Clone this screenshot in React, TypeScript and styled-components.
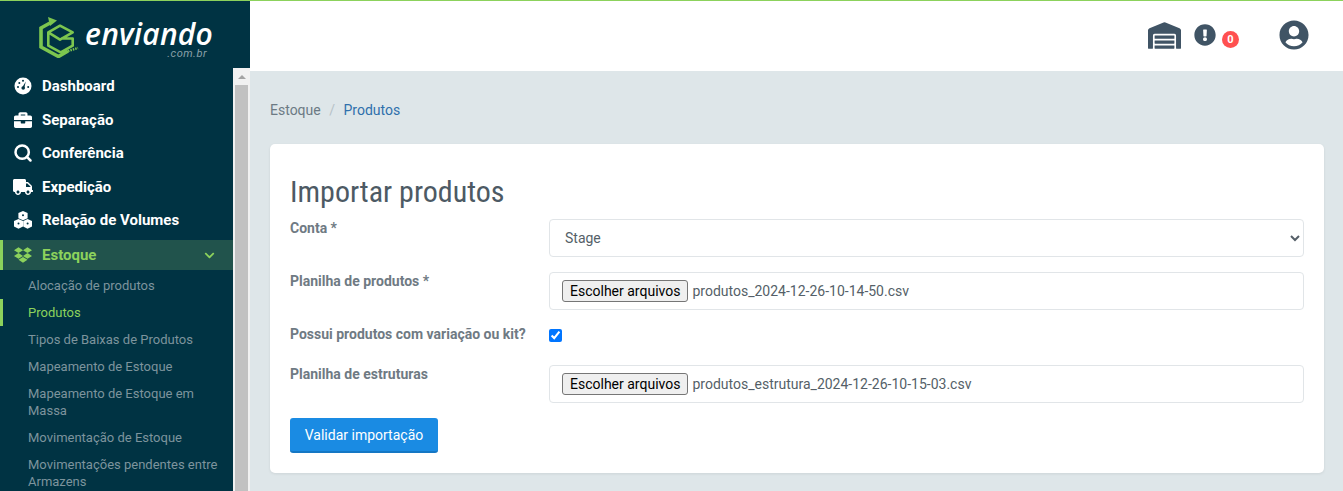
import React from 'react';
import styled, { createGlobalStyle } from 'styled-components';
import { FaBriefcase, FaTruck, FaDropbox, FaChevronDown, FaExclamationCircle, FaUserCircle, FaWarehouse } from 'react-icons/fa';
import { FiSearch } from 'react-icons/fi';

const Global = createGlobalStyle`
  html, body { margin: 0; padding: 0; height: 100%; overflow: hidden; }
  body { font-family: Roboto, "Liberation Sans", sans-serif; background: #dee6e9; }
  * { box-sizing: border-box; }
`;
const Page = styled.div`display: flex; height: 491px; border-top: 1px solid #8cd25c; overflow: hidden;`;
const Side = styled.aside`width: 250px; flex: none; display: flex; flex-direction: column; background: #003343;`;
const Brand = styled.div`height: 67px; flex: none; display: flex; align-items: flex-start; padding: 16px 0 0 39px; gap: 6px;`;
const BrandText = styled.div`display: flex; flex-direction: column; align-items: flex-end; width: 128px; color: #fff; margin-top: 3px;`;
const BrandName = styled.span`font: italic 600 30px/28px "Open Sans", Roboto, sans-serif; letter-spacing: .2px; white-space: nowrap;`;
const BrandSub = styled.span`font: italic 400 11px/11px Roboto, sans-serif; color: #8aa0a8; margin-right: 6px; letter-spacing: .5px;`;
const SideBody = styled.div`display: flex; flex: 1; min-height: 0;`;
const Nav = styled.nav`width: 233px; flex: none; display: flex; flex-direction: column; overflow: hidden; padding-top: 1.5px;`;
const MainItem = styled.div<{ $active?: boolean }>`
  height: ${p => p.$active ? '30px' : '33.5px'}; flex: none; display: flex; align-items: center; padding-left: 14px;
  margin: ${p => p.$active ? '3px 0 1.5px' : '0'};
  font-size: 15px; font-weight: 700; color: ${p => p.$active ? '#8cd25c' : '#fff'};
  background: ${p => p.$active ? '#21534c' : 'transparent'};
  box-shadow: ${p => p.$active ? 'inset 3px 0 0 #8cd25c' : 'none'};
  svg { width: 18px; height: 18px; flex: none; margin-right: 10px; }
`;
const TruckIcon = styled(FaTruck)`&& { width: 20px; height: 18px; margin: 0 9px 0 -1px; }`;
const SearchIcon = styled(FiSearch)`&& { width: 20px; height: 20px; margin: 0 9px 0 -1px; }`;
const Chevron = styled.span`margin-left: auto; display: flex; margin-right: 18px; svg { width: 11px; height: 11px; margin: 0; }`;
const SubItem = styled.div<{ $active?: boolean }>`
  flex: none; padding: 5px 10px 5px 28px; min-height: 27px; font-size: 13px; line-height: 17px;
  color: ${p => p.$active ? '#8cd25c' : '#7d949d'};
  box-shadow: ${p => p.$active ? 'inset 3px 0 0 #8cd25c' : 'none'};
`;
const Scroll = styled.div`width: 17px; flex: none; background: #f1f1f1; border-left: 2px solid #f1f1f1; border-right: 2px solid #f1f1f1; display: flex; flex-direction: column;`;
const ScrollArrow = styled.div`height: 17px; flex: none; display: flex; align-items: center; justify-content: center;
  &::before { content: ""; border-left: 4px solid transparent; border-right: 4px solid transparent; border-bottom: 4px solid #a3a3a3; }`;
const ScrollThumb = styled.div`flex: 1; background: #c1c1c1;`;
const Main = styled.main`flex: 1; min-width: 0; display: flex; flex-direction: column;`;
const Header = styled.header`height: 70px; flex: none; background: #fff; position: relative; color: #405465;`;
const Warehouse = styled.span`position: absolute; left: 898px; top: 21px; display: flex; svg { width: 33px; height: 27px; }`;
const Alert = styled.span`position: absolute; left: 944px; top: 23px; display: flex; svg { width: 22px; height: 22px; }`;
const Badge = styled.span`position: absolute; left: 972px; top: 30px; width: 17px; height: 17px; border-radius: 50%; background: #ff5050; color: #fff; font-size: 11px; font-weight: 700; display: flex; align-items: center; justify-content: center;`;
const User = styled.span`position: absolute; left: 1029px; top: 19px; display: flex; svg { width: 30px; height: 30px; }`;
const Content = styled.div`flex: 1; padding: 30px 19px 0 20px; display: flex; flex-direction: column;`;
const Crumbs = styled.div`font-size: 14px; line-height: 18px; color: #6c7a84; display: flex; gap: 8.5px; margin-bottom: 25px;`;
const Sep = styled.span`color: #b6c2c8;`;
const CrumbLink = styled.span`color: #2f70ac;`;
const Card = styled.section`background: #fff; border-radius: 5px; padding: 31px 20px 20px; box-shadow: 0 1px 3px rgba(0,0,0,.08); display: flex; flex-direction: column;`;
const Title = styled.h1`margin: 0 0 10px; font-weight: 400; font-size: 30px; line-height: 34px; font-stretch: condensed; color: #4d5a64;`;
const Row = styled.div<{ $h: number }>`display: grid; grid-template-columns: 259px 1fr; height: ${p => p.$h}px; margin-bottom: 15px;`;
const Label = styled.label`font-size: 14px; line-height: 18px; font-weight: 700; color: #6f7a83;`;
const Field = styled.div`border: 1px solid #e1e5e8; border-radius: 4px; height: 38px; display: flex; align-items: center; padding: 0 12px;`;
const SelectField = styled.select`border: 1px solid #e1e5e8; border-radius: 4px; height: 38px; width: 100%; background: #fff; padding: 0 11px; font: 14px Roboto, sans-serif; color: #555f68;`;
const FileBtn = styled.button`font: 14px Roboto, sans-serif; height: 22px; padding: 0 7px 0 7px; background: #efefef; border: 1px solid #767676; border-radius: 3px; color: #000; margin-right: 4px;`;
const FileName = styled.span`font: 14px Roboto, sans-serif; color: #555f68;`;
const Check = styled.input`display: block; width: 13px; height: 13px; margin: 4px 0 0; accent-color: #0075ff;`;
const Submit = styled.button`align-self: flex-start; height: 35px; width: 148px; background: #1a8be3; border: 0; border-bottom: 2px solid #1577c4; border-radius: 3px; color: #fff; font: 14px Roboto, sans-serif;`;

const Logo = () => (
  <svg width="40" height="41" viewBox="0 0 40 41" fill="none" stroke="#7cc64f" strokeWidth="3" style={{ flex: 'none' }}>
    <path d="M11 6 L2 11 V30 L19.5 39.5 L29 34" strokeWidth="3.6" />
    <path d="M9 0 L18 3.5 L11 9 Z" fill="#7cc64f" stroke="none" />
    <path d="M18 3.5 L33 11" strokeWidth="0" />
    <path d="M9.3 15.3 L21 8.7 L33.7 15.3 L21 22.7 Z M9.3 15.3 V28.7 L21.7 35.3 L33.7 28.7 V21.5 H22" strokeWidth="2.6" strokeLinejoin="round" />
    <path d="M29 34 L39 31" strokeWidth="2.4" strokeDasharray="1.5 1" />
  </svg>
);

const GaugeIcon = () => (
  <svg viewBox="0 0 18 18">
    <circle cx="9" cy="9" r="8.5" fill="#fff" />
    <path d="M8.2 10.6 L11.8 4.4 L10.2 11.2 Z" fill="#003343" />
    <circle cx="9.2" cy="11" r="1.8" fill="#003343" />
    <g fill="#003343">
      <circle cx="4" cy="10" r="1" /><circle cx="5.3" cy="6" r="1" /><circle cx="9" cy="3.8" r="1" /><circle cx="14.2" cy="10" r="1" />
    </g>
  </svg>
);

const CubesIcon = () => (
  <svg viewBox="0 0 18 18" fill="#fff">
    <path d="M9 0 L13.6 2 V7.2 L9 9.2 L4.4 7.2 V2 Z" />
    <path d="M4.5 8 L9 10 V15.6 L4.5 17.8 L0 15.6 V10 Z" />
    <path d="M13.5 8 L18 10 V15.6 L13.5 17.8 L9.2 15.6 V10 Z" />
    <g fill="#003343">
      <circle cx="9" cy="4.2" r="1" /><circle cx="4.5" cy="12.4" r="1" /><circle cx="13.6" cy="12.4" r="1" />
    </g>
  </svg>
);

const App = () => (
  <Page>
    <Global />
    <Side>
      <Brand>
        <Logo />
        <BrandText><BrandName>enviando</BrandName><BrandSub>.com.br</BrandSub></BrandText>
      </Brand>
      <SideBody>
        <Nav>
          <MainItem><GaugeIcon />Dashboard</MainItem>
          <MainItem><FaBriefcase />Separação</MainItem>
          <MainItem><SearchIcon strokeWidth={3} />Conferência</MainItem>
          <MainItem><TruckIcon />Expedição</MainItem>
          <MainItem><CubesIcon />Relação de Volumes</MainItem>
          <MainItem $active><FaDropbox />Estoque<Chevron><FaChevronDown /></Chevron></MainItem>
          <SubItem>Alocação de produtos</SubItem>
          <SubItem $active>Produtos</SubItem>
          <SubItem>Tipos de Baixas de Produtos</SubItem>
          <SubItem>Mapeamento de Estoque</SubItem>
          <SubItem>Mapeamento de Estoque em Massa</SubItem>
          <SubItem>Movimentação de Estoque</SubItem>
          <SubItem>Movimentações pendentes entre Armazens</SubItem>
        </Nav>
        <Scroll><ScrollArrow /><ScrollThumb /></Scroll>
      </SideBody>
    </Side>
    <Main>
      <Header>
        <Warehouse><FaWarehouse /></Warehouse>
        <Alert><FaExclamationCircle /></Alert>
        <Badge>0</Badge>
        <User><FaUserCircle /></User>
      </Header>
      <Content>
        <Crumbs><span>Estoque</span><Sep>/</Sep><CrumbLink>Produtos</CrumbLink></Crumbs>
        <Card>
          <Title>Importar produtos</Title>
          <Row $h={38}><Label>Conta *</Label><SelectField defaultValue="Stage"><option>Stage</option></SelectField></Row>
          <Row $h={38}><Label>Planilha de produtos *</Label><Field><FileBtn>Escolher arquivos</FileBtn><FileName>produtos_2024-12-26-10-14-50.csv</FileName></Field></Row>
          <Row $h={25}><Label>Possui produtos com variação ou kit?</Label><div><Check type="checkbox" defaultChecked /></div></Row>
          <Row $h={38}><Label>Planilha de estruturas</Label><Field><FileBtn>Escolher arquivos</FileBtn><FileName>produtos_estrutura_2024-12-26-10-15-03.csv</FileName></Field></Row>
          <Submit>Validar importação</Submit>
        </Card>
      </Content>
    </Main>
  </Page>
);
export default App;
